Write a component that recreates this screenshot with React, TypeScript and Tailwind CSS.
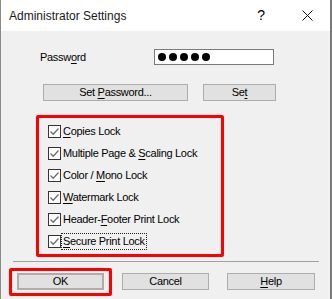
import React from 'react'

const ui = { fontFamily: '"Liberation Sans", Arial, sans-serif' }

function U({ children }: { children: React.ReactNode }) {
  return <span className="underline decoration-1 underline-offset-[2px]">{children}</span>
}

function Check({ children, focus }: { children: React.ReactNode; focus?: boolean }) {
  return (
    <div className="flex h-[13px] items-center">
      <span className="flex h-[13px] w-[13px] shrink-0 items-center justify-center border border-[#333333] bg-white">
        <svg width="11" height="11" viewBox="0 0 11 11">
          <path d="M1.5 5.5 L4.2 8.2 L9.5 2.5" fill="none" stroke="#6d6d6d" strokeWidth="1.3" />
        </svg>
      </span>
      <span
        className={
          'ml-[1px] px-[1px] py-[1px] leading-[13px] ' +
          (focus ? 'outline outline-1 outline-dotted outline-[#222]' : '')
        }
      >
        {children}
      </span>
    </div>
  )
}

function Btn({
  children,
  className = '',
}: {
  children: React.ReactNode
  className?: string
}) {
  return (
    <div
      className={
        'flex h-[17px] items-center justify-center border border-[#adadad] bg-[#e1e1e1] text-black ' +
        className
      }
    >
      <span>{children}</span>
    </div>
  )
}

export default function App() {
  return (
    <div className="relative h-[299px] w-[332px] overflow-hidden bg-white">
      <div
        className="flex h-[299px] w-[332px] flex-col border-l border-r-2 border-l-[#8a8a8a] border-r-[#7a7a7a] bg-[#f0f0f0] text-[11px] tracking-[-0.3px] text-black"
        style={ui}
      >
        <div className="flex h-[31px] shrink-0 items-center bg-white pl-[8px] tracking-normal">
          <span className="text-[12px] text-[#1a1a1a]">Administrator Settings</span>
          <span className="ml-auto mr-[37px] text-[14px]">?</span>
          <svg width="11" height="11" viewBox="0 0 11 11" className="mr-[17px]">
            <path d="M0.5 0.5 L10.5 10.5 M10.5 0.5 L0.5 10.5" stroke="#111" strokeWidth="1" />
          </svg>
        </div>

        <div className="mt-[18px] flex h-[16px] items-center">
          <span className="ml-[39px]">
            Passw<U>o</U>rd
          </span>
          <div className="ml-auto mr-[56px] flex h-[16px] w-[120px] items-center gap-[3px] border border-[#7a7a7a] bg-white pl-[3px]">
            {[0, 1, 2, 3, 4].map((i) => (
              <span key={i} className="h-[8px] w-[8px] rounded-full bg-black" />
            ))}
          </div>
        </div>

        <div className="mt-[19px] flex">
          <Btn className="ml-[42px] w-[145px]">
            Set <U>P</U>assword...
          </Btn>
          <Btn className="ml-[15px] w-[73px]">
            Se<U>t</U>
          </Btn>
        </div>

        <div className="ml-[35px] mt-[14px] flex h-[142px] w-[188px] flex-col gap-[9px] rounded-[2px] border-[3px] border-[#ff0000] pl-[9px] pt-[7px]">
          <Check>
            <U>C</U>opies Lock
          </Check>
          <Check>
            Multiple Page &amp; <U>S</U>caling Lock
          </Check>
          <Check>
            Color / <U>M</U>ono Lock
          </Check>
          <Check>
            <U>W</U>atermark Lock
          </Check>
          <Check>
            Header-<U>F</U>ooter Print Lock
          </Check>
          <Check focus>
            <U>S</U>ecure Print Lock
          </Check>
        </div>

        <div className="ml-[12px] mt-[4px] h-[1px] w-[306px] bg-[#a0a0a0]" />

        <div className="mt-[11px] flex">
          <div className="relative ml-[16px]">
            <Btn className="w-[87px] border-2 border-[#0078d7]">OK</Btn>
            <span className="absolute -bottom-[6px] -left-[8px] -right-[8px] -top-[5px] rounded-[2px] border-[3px] border-[#ff0000]" />
          </div>
          <Btn className="ml-[18px] w-[87px]">Cancel</Btn>
          <Btn className="ml-[18px] w-[88px]">
            <U>H</U>elp
          </Btn>
        </div>
      </div>
    </div>
  )
}
